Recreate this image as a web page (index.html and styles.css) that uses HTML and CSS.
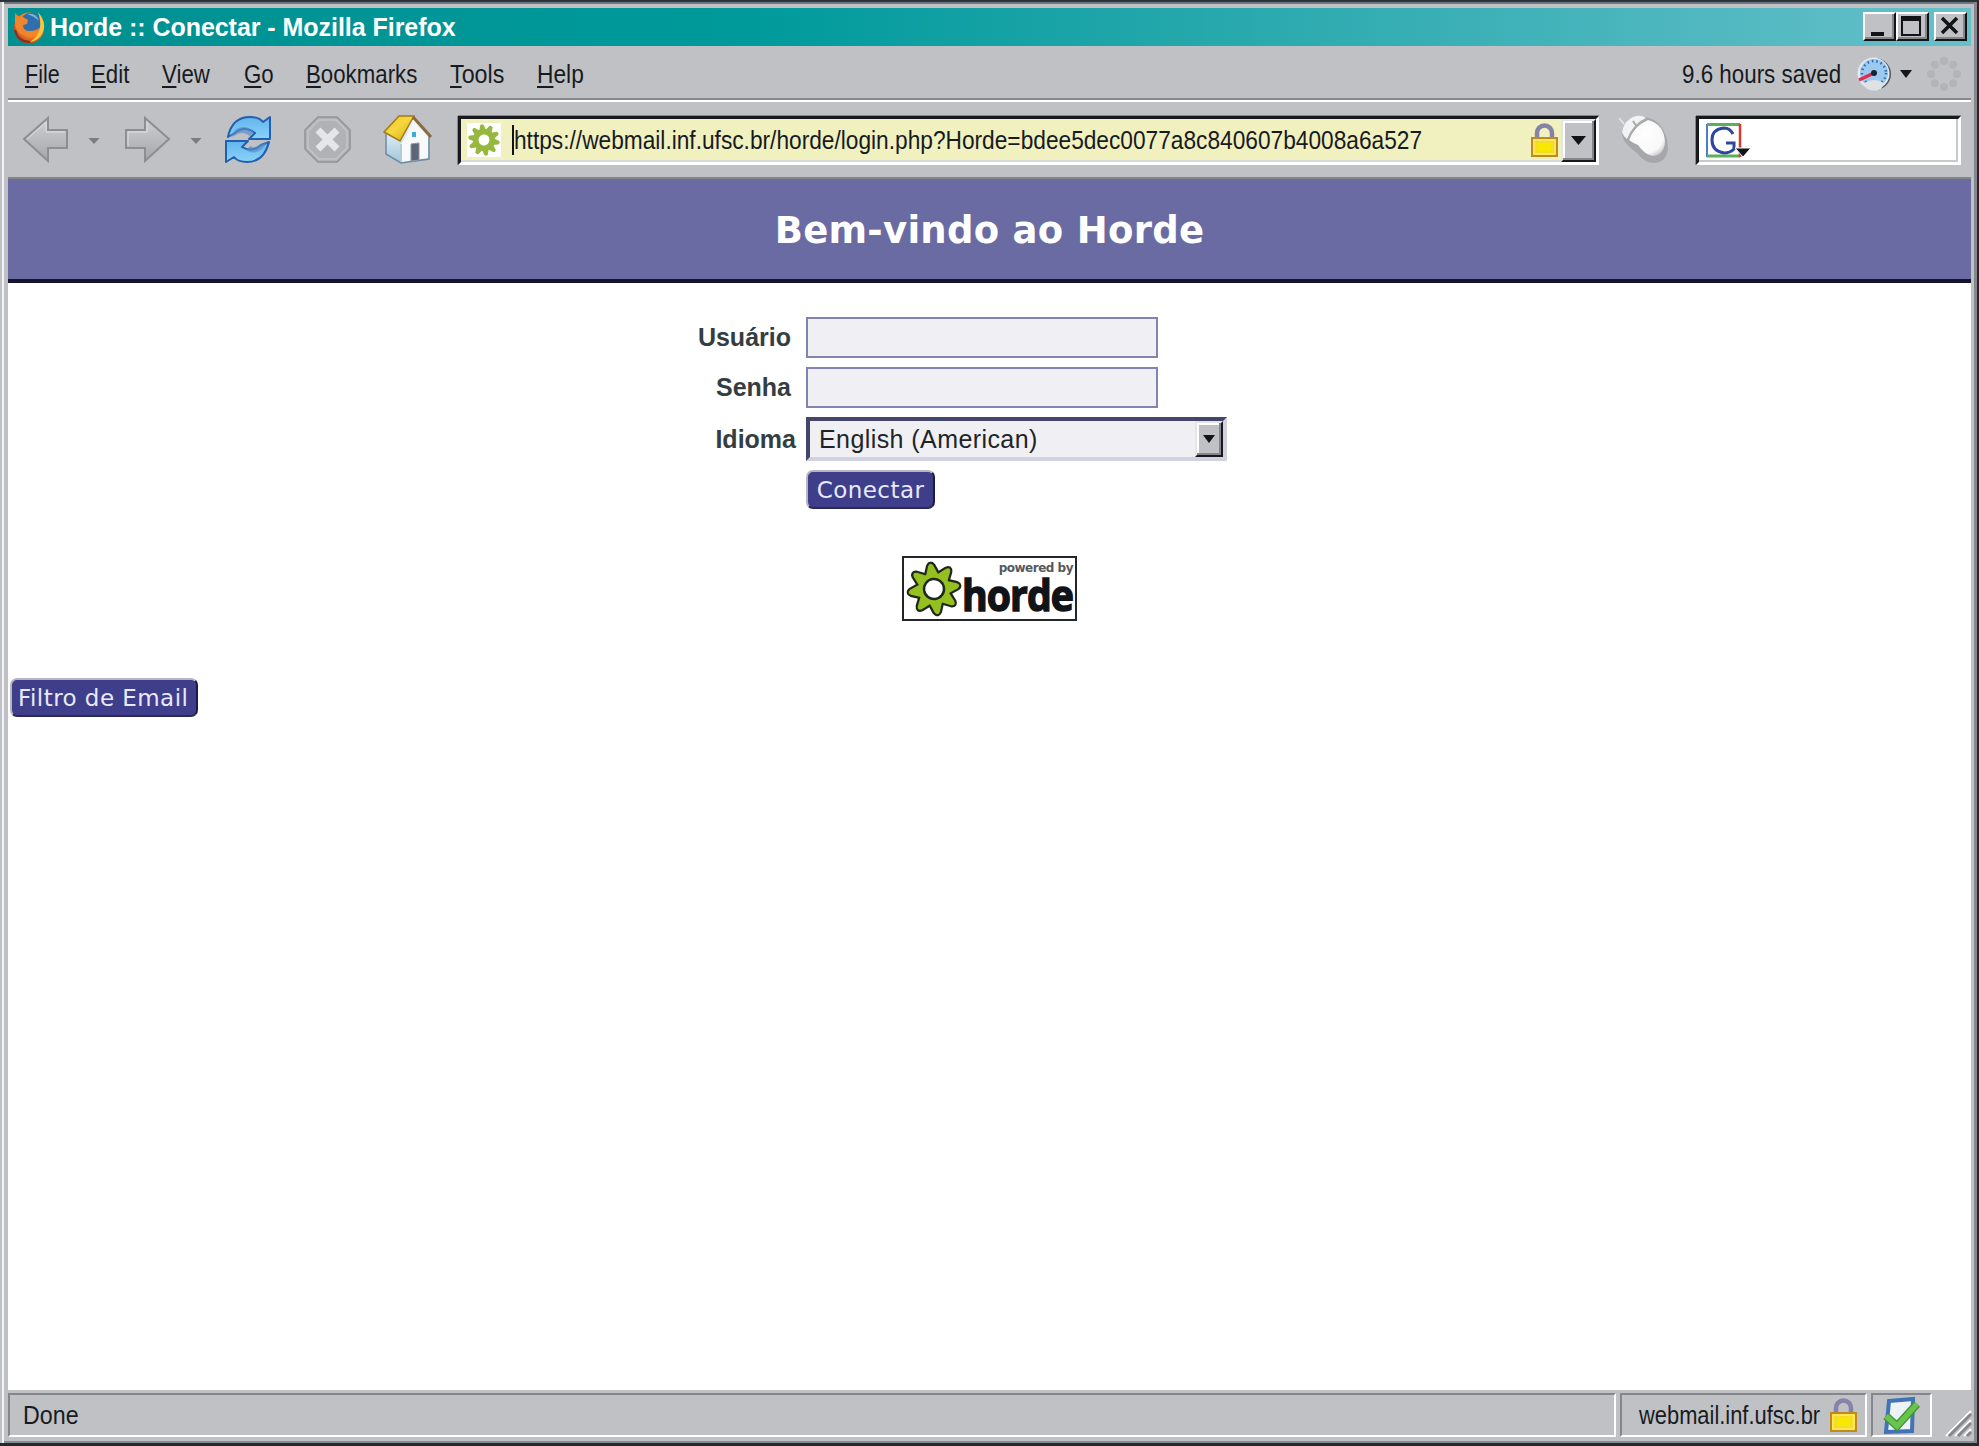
FILE: index.html
```html
<!DOCTYPE html>
<html lang="pt-BR">
<head>
<meta charset="utf-8">
<title>Horde :: Conectar - Mozilla Firefox</title>
<link rel="stylesheet" href="styles.css">
</head>
<body>
<svg width="0" height="0" class="defs">
  <defs>
    <linearGradient id="metal" x1="0" y1="0" x2="0" y2="1"><stop offset="0" stop-color="#cfd0d2"/><stop offset="1" stop-color="#a5a6aa"/></linearGradient>
    <linearGradient id="blue" x1="0" y1="0" x2="0" y2="1"><stop offset="0" stop-color="#62b4ee"/><stop offset="1" stop-color="#8ad4fa"/></linearGradient>
    <linearGradient id="roof" x1="0" y1="0" x2="1" y2="1"><stop offset="0" stop-color="#f0c52c"/><stop offset=".45" stop-color="#f6d83c"/><stop offset="1" stop-color="#d3a311"/></linearGradient>
    <linearGradient id="wall" x1="0" y1="0" x2="0" y2="1"><stop offset="0" stop-color="#fff"/><stop offset="1" stop-color="#9fc6dc"/></linearGradient>
    <radialGradient id="fox" cx=".6" cy=".35" r=".7"><stop offset="0" stop-color="#ffd84a"/><stop offset=".6" stop-color="#f58426"/><stop offset="1" stop-color="#b8381b"/></radialGradient>
    <radialGradient id="shell" cx=".45" cy=".4" r=".65"><stop offset="0" stop-color="#fff"/><stop offset=".8" stop-color="#f8f8f8"/><stop offset="1" stop-color="#d0d0d2"/></radialGradient>
    <symbol id="gear" viewBox="-28 -28 56 56">
      <g>
        <path id="t" d="M-6.500-13 L-2.500-23.500 Q0-27.500 2.500-23.500 L6.500-13Z"/>
        <use href="#t" transform="rotate(45)"/><use href="#t" transform="rotate(90)"/><use href="#t" transform="rotate(135)"/><use href="#t" transform="rotate(180)"/><use href="#t" transform="rotate(225)"/><use href="#t" transform="rotate(270)"/><use href="#t" transform="rotate(315)"/>
      </g>
    </symbol>
    <symbol id="cog" viewBox="-28 -28 56 56">
      <path id="k" d="M-6-14 L-3-24.500 Q0-28 3-24.500 L6-14Z"/>
      <use href="#k" transform="rotate(36)"/><use href="#k" transform="rotate(72)"/><use href="#k" transform="rotate(108)"/><use href="#k" transform="rotate(144)"/><use href="#k" transform="rotate(180)"/><use href="#k" transform="rotate(216)"/><use href="#k" transform="rotate(252)"/><use href="#k" transform="rotate(288)"/><use href="#k" transform="rotate(324)"/>
    </symbol>
    <symbol id="lock" viewBox="0 0 28 34">
      <path d="M6 16V10a7.500 7.500 0 0 1 15 0V16" fill="none" stroke="#8583a8" stroke-width="4.500"/>
      <path d="M1 15h25v18H1z" fill="#f5dc28" stroke="#c08a1c" stroke-width="2"/>
      <path d="M3 17h21v14H3z" fill="none" stroke="#fff08c"/><path d="M7 20h13v8H7z" fill="#f8e800"/>
    </symbol>
  </defs>
</svg>
<div class="window">
  <header class="titlebar">
    <svg class="fox" viewBox="0 0 33 34"><ellipse cx="16" cy="18" rx="15" ry="15.500" fill="url(#fox)"/><circle cx="18" cy="13" r="10.500" fill="#2f6fae"/><path d="M14 4q9-2 12 7-5-5-12-7" fill="#79b8df"/><path d="M2 3q3 4 8 4l5 3-1 4-4 1q0 6 7 6 7 0 10-4-2 9-11 9Q3 25 2 14z" fill="#f0852b"/><path d="M25 2q9 10 5 20-4 9-13 10 9-6 10-14 1-8-2-16" fill="#f8c63b"/><path d="M2 20q3 12 15 12" fill="none" stroke="#7f3030" stroke-width="2"/></svg>
    <h1 class="title">Horde :: Conectar - Mozilla Firefox</h1>
    <div class="controls">
      <span class="ctl"><svg viewBox="0 0 32 29"><path d="M8 20h13v4H8z" fill="#101418"/></svg></span>
      <span class="ctl"><svg viewBox="0 0 32 29"><path d="M5 4h20v20H5zM7 9v13h16V9z" fill="#101418" fill-rule="evenodd"/></svg></span>
      <span class="ctl close"><svg viewBox="0 0 32 29"><path d="M8 6l15 15M23 6L8 21" stroke="#101418" stroke-width="3.500"/></svg></span>
    </div>
  </header>
  <nav class="menubar">
    <span class="m1"><u>F</u>ile</span><span class="m2"><u>E</u>dit</span><span class="m3"><u>V</u>iew</span><span class="m4"><u>G</u>o</span><span class="m5"><u>B</u>ookmarks</span><span class="m6"><u>T</u>ools</span><span class="m7"><u>H</u>elp</span>
    <span class="saved">9.6 hours saved</span>
    <svg class="gauge" viewBox="0 0 35 36"><circle cx="18" cy="18" r="16" fill="#4b5968"/><circle cx="16.500" cy="17.500" r="16" fill="#e4e9ef"/><circle cx="17" cy="17" r="14" fill="#9cc9ee"/><circle cx="17" cy="17" r="12" fill="none" stroke="#2b6ab2" stroke-width="2.500" stroke-dasharray="1.500 3"/><path d="M7 27q10-6 20 0l-3 6q-7 3-14 0z" fill="#dfe1e4"/><path d="M17 17L2 24" stroke="#e22c48" stroke-width="3.500"/><circle cx="17" cy="17" r="3" fill="#162334"/></svg>
    <svg class="drop" viewBox="0 0 12 8"><path d="M0 0h12L6 8z" fill="#14181c"/></svg>
    <svg class="throb" viewBox="-17 -17 34 34" fill="#b3b4b7"><circle cy="-13" r="4"/><circle cx="9.200" cy="-9.200" r="4"/><circle cx="13" r="4"/><circle cx="9.200" cy="9.200" r="4"/><circle cy="13" r="4"/><circle cx="-9.200" cy="9.200" r="4"/><circle cx="-13" r="4"/><circle cx="-9.200" cy="-9.200" r="4"/></svg>
  </nav>
  <div class="toolbar">
    <svg class="back" viewBox="0 0 48 48"><path d="M2 23L26 2v12h19v18H26v13z" fill="url(#metal)" stroke="#8d8e92" stroke-width="2"/><path d="M5 23L24 6v10h19" fill="none" stroke="#dedfe1"/></svg>
    <svg class="drop grey" viewBox="0 0 12 8"><path d="M.5 1h11L6 7z" fill="#7c7d81"/></svg>
    <svg class="fwd" viewBox="0 0 48 48"><path d="M45 23L21 2v12H2v18h19v13z" fill="url(#metal)" stroke="#8d8e92" stroke-width="2"/><path d="M4 30V16h19V6" fill="none" stroke="#dedfe1"/></svg>
    <svg class="drop grey" viewBox="0 0 12 8"><path d="M.5 1h11L6 7z" fill="#7c7d81"/></svg>
    <svg class="reload" viewBox="0 0 49 48"><g stroke="#235fae" stroke-width="2" stroke-linejoin="round" fill="url(#blue)"><path d="M4 21Q8 1 26 1q9 0 13 5l7-5v22H25l6-6Q20 9 11 17z"/><path d="M45 26Q40 46 23 46q-9 0-13-5l-8 5V25h22l-6 6q10 6 19-2z"/></g><path d="M5 21l7-8q10-5 18 3l-4 4q-8-6-16 0zM44 26l-7 8q-8 5-15 0l4-4q6 3 11-2z" fill="#548dc8" opacity=".65"/></svg>
    <svg class="stop" viewBox="0 0 48 48"><path d="M14 1h19l13 13v19L33 46H14L1 33V14z" fill="#b1b2b5" stroke="#929397" stroke-width="1.500"/><path d="M15 4h17l11 11v17L32 43H15L4 32V15z" fill="none" stroke="#c4c5c8" stroke-width="1.500"/><path d="M14 14l19 19M33 14L14 33" stroke="#e5e6e8" stroke-width="7"/></svg>
    <svg class="home" viewBox="0 0 50 50"><path d="M3 18v21l15 9 28-4V20L31 3z" fill="url(#wall)" stroke="#6b8ca7" stroke-width="1.500"/><path d="M18 29L31 8l14 14v21l-27 4z" fill="#f7f9fb"/><path d="M18 29v18" stroke="#b5cad8" stroke-width="2"/><path d="M28 46V29l8-1v17z" fill="#5c6676" stroke="#8d949d"/><path d="M29 17h4v5h-4z" fill="#3eaada"/><path d="M16 1h15L17 26 1 17z" fill="url(#roof)" stroke="#9f7b1b" stroke-width="1.500"/><path d="M30 2l18 20" fill="none" stroke="#8b6a3e" stroke-width="3"/></svg>
    <div class="url">
      <svg class="fav" viewBox="0 0 34 34"><path d="M0 0h34v34H0z" fill="#fff"/><g transform="rotate(-8 17 17)"><use href="#cog" width="34" height="34" fill="#96b83e"/><circle cx="17" cy="17" r="11" fill="#96b83e"/><circle cx="17" cy="17" r="5.500" fill="#fff"/></g></svg>
      <span class="addr"><span>https://webmail.inf.ufsc.br/horde/login.php?Horde=bdee5dec0077a8c840607b4008a6a527</span></span>
      <svg class="lock"><use href="#lock" width="28" height="34"/></svg>
      <span class="pick"><svg class="drop" viewBox="0 0 15 9"><path d="M0 0h15L7.500 9z" fill="#101418"/></svg></span>
    </div>
    <svg class="mouse" viewBox="0 0 50 50"><path d="M0 3l5 6" stroke="#e6e6e8" stroke-width="1.500"/><path d="M3 20Q5 7 15 3q14-4 25 6 9 10 9 24-1 14-14 15-10 0-17-10Q5 29 3 20z" fill="#a6a7aa"/><path d="M3 17Q5 6 14 2q8-3 13 1-12 5-19 21-4-3-5-7z" fill="#f3f3f4"/><path d="M10 25Q15 11 29 5q16 4 17 22-1 13-12 14-8-1-15-11-5-2-9-5z" fill="url(#shell)"/><path d="M9 25Q14 10 28 4M14 6l4 6" fill="none" stroke="#a9abae" stroke-width="2"/></svg>
    <div class="search">
      <svg class="g" viewBox="0 0 46 35"><path d="M1 34V1" stroke="#4a7fc4" stroke-width="2"/><path d="M1 1.500h33M1 33h33" stroke="#5cae5c" stroke-width="3"/><path d="M34 1v33" stroke="#d93a30" stroke-width="2.500"/><path d="M27 11Q24 5 18 5 6 6 6 17t12 13q6 0 10-4v-6h-8" fill="none" stroke="#2d47a0" stroke-width="3"/><path d="M29 25h16l-8 9z" fill="#101418" stroke="#fff" stroke-width="1"/></svg>
    </div>
  </div>
  <main class="page">
    <h2 class="banner"><span>Bem-vindo ao Horde</span></h2>
    <form class="login">
      <label class="l1">Usuário</label><div class="field"></div>
      <label class="l2">Senha</label><div class="field"></div>
      <label class="l3">Idioma</label>
      <div class="select"><span class="lang">English (American)</span><span class="pick"><svg class="drop" viewBox="0 0 12 8"><path d="M0 0h12L6 8z" fill="#101418"/></svg></span></div>
      <button type="button" class="btn go"><span>Conectar</span></button>
    </form>
    <div class="badge">
      <svg viewBox="0 0 56 56"><g transform="rotate(-8 28 28)"><use href="#gear" width="56" height="56" fill="#94c11f" stroke="#20281c" stroke-width="4.500"/><circle cx="28" cy="28" r="17.500" fill="#20281c"/><use href="#gear" width="56" height="56" fill="#94c11f"/><circle cx="28" cy="28" r="15.500" fill="#94c11f"/><circle cx="28" cy="28" r="10" fill="#fff" stroke="#20281c" stroke-width="2.500"/></g></svg>
      <div class="brand"><small>powered by</small><b>horde</b></div>
    </div>
    <button type="button" class="btn filter"><span>Filtro de Email</span></button>
  </main>
  <footer class="status">
    <div class="panel done"><span>Done</span></div>
    <div class="panel host"><span>webmail.inf.ufsc.br</span><svg class="lock"><use href="#lock" width="28" height="34"/></svg></div>
    <div class="panel check"><svg viewBox="0 0 37 37"><path d="M6 4l24-2-1 32-26 1z" fill="#edf2f8" stroke="#4173b6" stroke-width="4"/><path d="M3 19l11 10L34 7" fill="none" stroke="#3e9437" stroke-width="8"/><path d="M3 19l11 10L34 7" fill="none" stroke="#68c44b" stroke-width="5.500"/></svg></div>
    <svg class="grip" viewBox="0 0 26 26"><path d="M1 26L26 1M10 26L26 10M19 26l7-7" stroke="#fff" stroke-width="2"/><path d="M4 26L26 4M13 26l13-13M22 26l4-4" stroke="#85868a" stroke-width="3"/></svg>
  </footer>
</div>
</body>
</html>
```
FILE: styles.css
```css
* { box-sizing: border-box; }
body { margin: 0; font-family: "Liberation Sans", Arial, sans-serif; font-size: 25px; color: #171b1f; overflow: hidden; }
h1, h2 { margin: 0; }
svg { display: block; flex: none; overflow: visible; }
.defs { position: absolute; }
span { white-space: nowrap; }
.window {
  width: 1979px; height: 1446px; display: flex; flex-direction: column;
  background: #c0c1c5; padding: 4px 6px 2px 8px;
  border: solid #25292e; border-width: 2px 2px 3px 0; border-top-color: #2b343b;
  box-shadow: inset 2px 0 #c0c1c5, inset 4px 0 #f1f2f5, inset -3px 0 #85898d, inset 0 -2px #858b8f, inset 0 2px #6f7880;
}
.titlebar { height: 38px; margin-top: 2px; flex: none; display: flex; align-items: center; padding: 0 4px 0 5px; background: linear-gradient(90deg, #009090, #009a9b 38%, #66c0ca 100%); }
.fox { width: 33px; height: 34px; }
.title { margin-left: 4px; font-size: 25px; line-height: 38px; color: #fff; white-space: nowrap; flex: 1; letter-spacing: -.04px; }
.controls { display: flex; height: 29px; margin-top: -1px; }
.ctl { width: 33px; height: 29px; background: #c0c1c5; border: 2px solid; border-color: #fff #101418 #101418 #fff; box-shadow: inset -2px -2px #85868a; }
.ctl svg { width: 32px; height: 29px; margin: -2px; }
.ctl.close { margin-left: 5px; }
.menubar { height: 56px; flex: none; display: flex; align-items: center; border-bottom: 2px solid #fff; box-shadow: inset 0 -2px #88898d; padding: 2px 0 0 17px; }
.menubar span { line-height: 30px; width: 66px; transform: scaleX(.89); transform-origin: 0 50%; }
.menubar u { text-underline-offset: 3px; text-decoration-thickness: 2px; text-decoration-skip-ink: none; }
.menubar .m1 { transform: scaleX(.86); }
.menubar .m2 { width: 71px; }
.menubar .m3 { width: 82px; }
.menubar .m4 { width: 62px; }
.menubar .m5 { width: 144px; }
.menubar .m6 { width: 87px; transform: scaleX(.93); }
.menubar .m7 { transform: scaleX(.91); }
.menubar .saved { margin-left: auto; width: 175px; transform: scaleX(.895); }
.gauge { width: 35px; height: 36px; }
.drop { width: 12px; height: 8px; }
.menubar .drop { margin: 0 15px 0 8px; }
.throb { width: 34px; height: 34px; margin-right: 10px; }
.toolbar { height: 77px; flex: none; display: flex; align-items: center; padding-left: 14px; border-bottom: 2px solid #85868a; }
.back, .fwd, .stop { width: 48px; height: 48px; }
.toolbar .grey { margin: 2px 24px 0 18px; }
.toolbar .fwd + .grey { margin-right: 22px; }
.reload { width: 49px; height: 48px; }
.stop { margin-left: 31px; }
.home { width: 50px; height: 50px; margin-left: 31px; }
.url { margin: 1px 0 0 25px; width: 1141px; height: 49px; display: flex; align-items: center; background: #f1f0bf; border: 3px solid; border-color: #17191c #fff #fff #17191c; box-shadow: inset -2px -2px #d9d9d9, 0 -1px #85868a, -1px 0 #85868a; padding-left: 6px; }
.fav { width: 34px; height: 34px; }
.addr { margin-left: 11px; border-left: 2px solid #101418; flex: 1; min-width: 0; line-height: 30px; }
.addr span { display: inline-block; transform: scaleX(.908); transform-origin: 0 50%; }
.lock { width: 28px; height: 34px; }
.url .lock { margin-right: 2px; }
.pick { background: #c0c1c5; display: flex; align-items: center; justify-content: center; border: 2px solid; border-color: #e4e5e7 #17191c #17191c #e4e5e7; box-shadow: inset -2px -2px #85868a, inset 2px 2px #fff; }
.url .pick { width: 35px; height: 43px; flex: none; }
.pick .drop { width: 15px; height: 9px; }
.mouse { width: 50px; height: 50px; margin-left: 20px; }
.search { margin: 1px 0 0 27px; width: 265px; height: 49px; background: #fff; border: 3px solid; border-color: #17191c #fff #fff #17191c; box-shadow: inset -2px -2px #c8c9cc, 0 -1px #85868a, -1px 0 #85868a; padding: 4px 0 0 7px; }
.g { width: 46px; height: 35px; }
.page { flex: 1; background: #fff; }
.banner { height: 104px; background: #6a6ba3; border-bottom: 4px solid #14172a; color: #fff; font: bold 37px/104px "DejaVu Sans", Verdana, sans-serif; text-align: center; letter-spacing: .28px; }
.login { display: grid; grid-template-columns: 788px 421px; column-gap: 10px; row-gap: 9px; grid-template-rows: 41px 41px 44px 40px; padding-top: 34px; color: #343d42; }
.login label { font-weight: bold; justify-self: end; align-self: center; padding-right: 5px; white-space: nowrap; }
.login .l3 { padding-right: 0; }
.field { width: 352px; background: #f0f0f4; border: 2px solid #8283b0; }
.select { display: flex; align-items: center; justify-content: space-between; background: #f0f0f4; border: 4px solid; border-color: #444669 #d0d2df #d0d2df #444669; padding-left: 9px; color: #202428; }
.lang { letter-spacing: .42px; }
.select .pick { width: 28px; height: 36px; }
.select .pick .drop { width: 12px; height: 8px; }
.btn { display: block; padding: 0; height: 39px; border: 2px solid; border-color: #b6b6c0 #1c1a48 #2b2a55 #b6b6c0; border-radius: 7px; background: #3f3e8b; color: #e8e9fb; font: 23px/34px "DejaVu Sans", Verdana, sans-serif; letter-spacing: .45px; white-space: nowrap; }
.go { grid-column: 2; width: 129px; }
.filter { width: 188px; margin: 57px 0 0 2px; text-align: left; padding-left: 6px; }
.badge { margin: 46px auto 0; width: 175px; height: 65px; border: 2px solid #22262a; display: flex; align-items: center; padding-left: 2px; }
.badge svg { width: 56px; height: 56px; }
.brand { width: 112px; display: flex; flex-direction: column; }
.brand small { font: bold 12px/12px "DejaVu Sans", sans-serif; color: #55595d; text-align: right; white-space: nowrap; letter-spacing: -.5px; padding-right: 1px; margin-top: -3px; }
.brand b { font: bold 43px/34px "Open Sans", sans-serif; color: #101418; -webkit-text-stroke: 1.500px #101418; transform: scaleX(.91); transform-origin: 0 50%; letter-spacing: -1px; margin-top: 4px; }
.status { height: 51px; flex: none; display: flex; padding-top: 3px; gap: 4px; }
.panel { height: 44px; border: 2px solid; border-color: #85868a #fff #fff #85868a; display: flex; align-items: center; line-height: 30px; }
.panel span { transform: scaleX(.93); transform-origin: 0 50%; }
.done { width: 1609px; padding-left: 13px; }
.host { width: 247px; padding-left: 17px; padding-right: 7px; }
.host span { width: 190px; transform: scaleX(.875); }
.host .lock { margin-left: auto; }
.check { width: 61px; justify-content: center; }
.check svg { width: 37px; height: 37px; }
.grip { width: 26px; height: 26px; margin: 17px 0 0 9px; }
```
